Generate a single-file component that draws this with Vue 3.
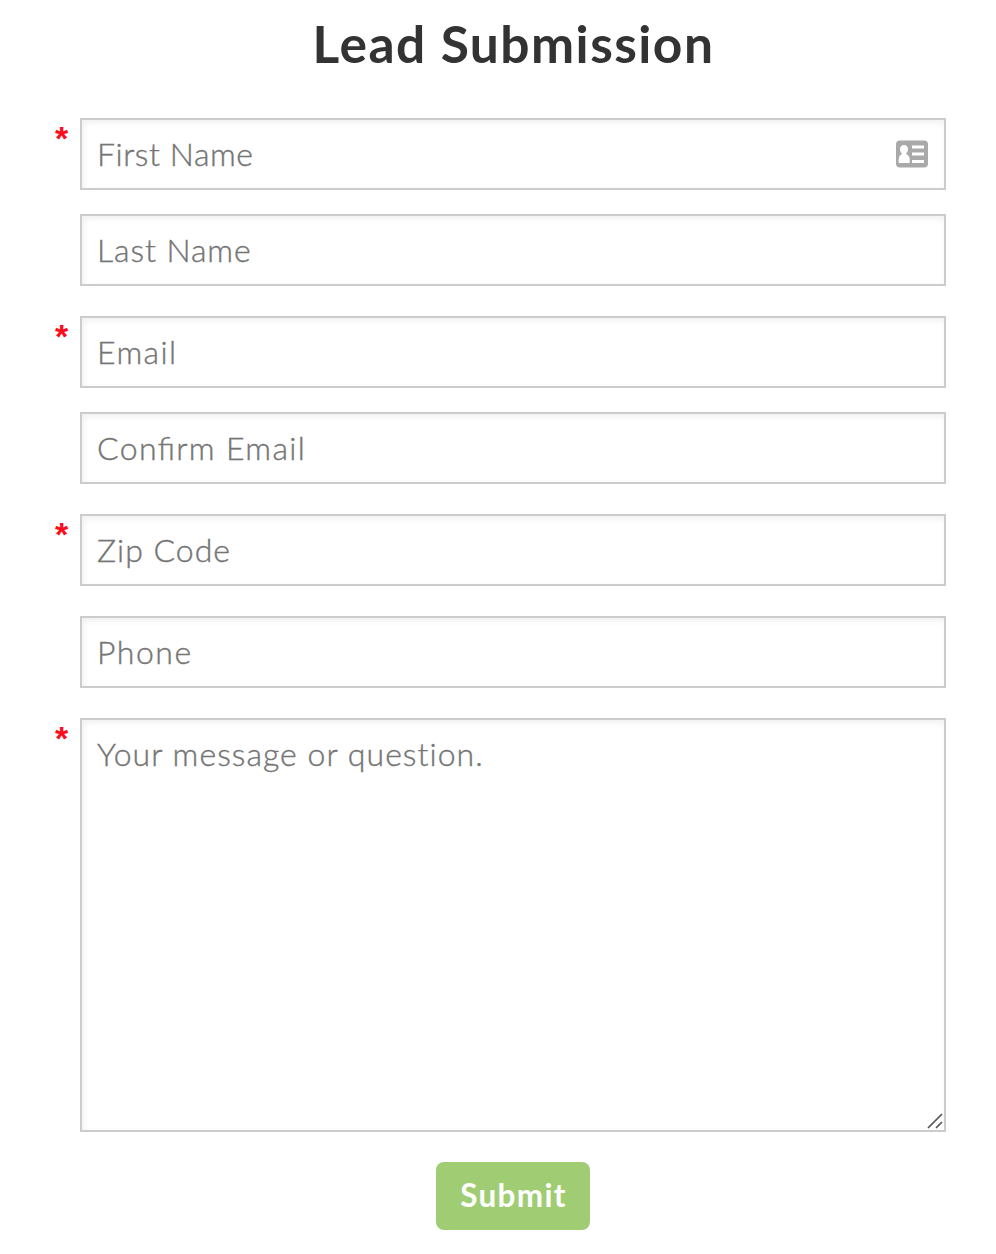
<script setup>
const groups = [
  {
    required: true,
    fields: [
      { id: 'first-name', label: 'First Name', contact: true },
      { id: 'last-name', label: 'Last Name' },
    ],
  },
  {
    required: true,
    fields: [
      { id: 'email', label: 'Email' },
      { id: 'confirm-email', label: 'Confirm Email' },
    ],
  },
  { required: true, fields: [{ id: 'zip', label: 'Zip Code' }] },
  { required: false, fields: [{ id: 'phone', label: 'Phone' }] },
  { required: true, fields: [{ id: 'message', label: 'Your message or question.', multiline: true }] },
]
</script>

<template>
  <form class="lead-form" @submit.prevent>
    <h1 class="title">Lead Submission</h1>
    <div v-for="(group, i) in groups" :key="i" class="group">
      <span class="mark">{{ group.required ? '*' : '' }}</span>
      <div class="fields">
        <div v-for="field in group.fields" :key="field.id" class="field">
          <template v-if="field.multiline">
            <textarea class="control area" :class="field.id" :placeholder="field.label"></textarea>
            <svg class="grip" width="16" height="16" viewBox="0 0 16 16">
              <path d="M1 15 15 1M9 15l6-6" fill="none" stroke="#555" stroke-width="1.7" />
            </svg>
          </template>
          <input v-else class="control" :class="field.id" type="text" :placeholder="field.label" />
          <svg v-if="field.contact" class="contact" width="32" height="28" viewBox="0 0 32 28">
            <rect y="0.500" width="32" height="27" rx="4" fill="#a9a9a9" />
            <path
              d="M8 5c2.400 0 4 1.700 4 4 0 1.900-.7 3.300-1.700 4.100v1.200c2.200.8 3.400 2.800 3.400 5.200v3.500H2.700v-3.500c0-2.400 1-4.400 3-5.200v-1.200C4.700 12.300 4 10.900 4 9c0-2.300 1.600-4 4-4z"
              fill="#fff"
            />
            <path d="M16 7h12M16 14h12M16 21.500h12" stroke="#fff" stroke-width="3" />
          </svg>
        </div>
      </div>
    </div>
    <button class="submit" type="submit">Submit</button>
  </form>
</template>

<style>
body {
  background: #fff;
}
</style>

<style scoped>
.lead-form {
  box-sizing: border-box;
  width: 996px;
  height: 1254px;
  padding: 9px 50px 0 55px;
  overflow: hidden;
  display: flex;
  flex-direction: column;
  font-family: Lato, 'Liberation Sans', sans-serif;
}
.title {
  margin: 0 0 39px 26px;
  height: 70px;
  line-height: 68px;
  font-size: 51.5px;
  font-weight: 700;
  letter-spacing: 1.45px;
  text-align: center;
  color: #333;
}
.group {
  display: flex;
  margin-bottom: 30px;
}
.mark {
  width: 25px;
  height: 36px;
  flex: none;
  font: 700 34px/40px 'Liberation Sans', sans-serif;
  color: #fc0d1b;
}
.fields {
  flex: 1;
  display: flex;
  flex-direction: column;
  gap: 24px;
}
.field {
  position: relative;
  display: flex;
}
.control {
  box-sizing: border-box;
  width: 100%;
  height: 72px;
  margin: 0;
  padding: 0 16px 2px 15px;
  border: 2px solid #ccc;
  border-radius: 0;
  outline: none;
  resize: none;
  background: #fff;
  box-shadow: inset 2px 3px 6px rgba(0, 0, 0, 0.06);
  font-family: Lato, 'Liberation Sans', sans-serif;
  font-size: 32px;
  font-weight: 300;
  line-height: 40px;
  color: #333;
}
.control::placeholder {
  color: #757575;
  opacity: 1;
  -webkit-text-stroke: 0.4px #757575;
}
.first-name {
  letter-spacing: 0.55px;
}
.last-name {
  letter-spacing: 0.9px;
}
.email {
  letter-spacing: 1.4px;
}
.confirm-email {
  letter-spacing: 1.35px;
  font-feature-settings: 'liga' 1;
}
.zip {
  letter-spacing: 1px;
}
.phone {
  letter-spacing: 1.5px;
}
.message {
  letter-spacing: 1.04px;
}
.area {
  height: 414px;
  padding-top: 14px;
}
.contact {
  position: absolute;
  right: 18px;
  top: 22px;
}
.grip {
  position: absolute;
  right: 3px;
  bottom: 3px;
}
.submit {
  align-self: center;
  width: 154px;
  height: 68px;
  margin-left: 25px;
  padding: 0 0 3px 1px;
  border: 0;
  border-radius: 8px;
  background: #a0cd74;
  color: #fff;
  font-family: Lato, 'Liberation Sans', sans-serif;
  font-size: 31.5px;
  font-weight: 700;
  letter-spacing: 1.3px;
}
</style>
